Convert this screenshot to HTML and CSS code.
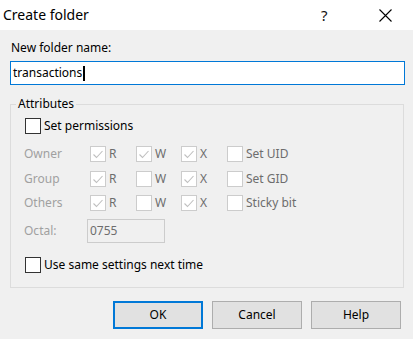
FILE: index.html
```html
<!DOCTYPE html>
<html>
<head>
<meta charset="utf-8">
<link rel="stylesheet" href="styles.css">
</head>
<body>
<div class="dialog">
  <div class="titlebar">
    <span class="title">Create folder</span>
    <span class="tb-help">?</span>
    <span class="tb-close"><svg width="13" height="13" viewBox="0 0 13 13"><path d="M0.5 0.5 L12.5 12.5 M12.5 0.5 L0.5 12.5" stroke="#000" stroke-width="1.1" fill="none"/></svg></span>
  </div>
  <div class="content">
    <div class="name-label">New folder name:</div>
    <div class="name-input"><span class="name-text">transactions</span><span class="caret"></span></div>
    <fieldset class="attrs">
      <legend class="attrs-legend">Attributes</legend>
      <div class="check-line">
        <span class="cb"></span><span class="cb-text">Set permissions</span>
      </div>
      <div class="perm-grid">
        <span class="perm-label">Owner</span>
        <span class="perm-cell"><span class="cb dis on"><svg viewBox="0 0 14 14"><polyline points="2.5,7.5 5.5,10.5 11.5,4"/></svg></span><span class="perm-text">R</span></span>
        <span class="perm-cell"><span class="cb dis on"><svg viewBox="0 0 14 14"><polyline points="2.5,7.5 5.5,10.5 11.5,4"/></svg></span><span class="perm-text">W</span></span>
        <span class="perm-cell"><span class="cb dis on"><svg viewBox="0 0 14 14"><polyline points="2.5,7.5 5.5,10.5 11.5,4"/></svg></span><span class="perm-text">X</span></span>
        <span class="perm-cell"><span class="cb dis"></span><span class="perm-text">Set UID</span></span>

        <span class="perm-label">Group</span>
        <span class="perm-cell"><span class="cb dis on"><svg viewBox="0 0 14 14"><polyline points="2.5,7.5 5.5,10.5 11.5,4"/></svg></span><span class="perm-text">R</span></span>
        <span class="perm-cell"><span class="cb dis"></span><span class="perm-text">W</span></span>
        <span class="perm-cell"><span class="cb dis on"><svg viewBox="0 0 14 14"><polyline points="2.5,7.5 5.5,10.5 11.5,4"/></svg></span><span class="perm-text">X</span></span>
        <span class="perm-cell"><span class="cb dis"></span><span class="perm-text">Set GID</span></span>

        <span class="perm-label">Others</span>
        <span class="perm-cell"><span class="cb dis on"><svg viewBox="0 0 14 14"><polyline points="2.5,7.5 5.5,10.5 11.5,4"/></svg></span><span class="perm-text">R</span></span>
        <span class="perm-cell"><span class="cb dis"></span><span class="perm-text">W</span></span>
        <span class="perm-cell"><span class="cb dis on"><svg viewBox="0 0 14 14"><polyline points="2.5,7.5 5.5,10.5 11.5,4"/></svg></span><span class="perm-text">X</span></span>
        <span class="perm-cell"><span class="cb dis"></span><span class="perm-text">Sticky bit</span></span>
      </div>
      <div class="octal-row">
        <span class="perm-label octal-label">Octal:</span>
        <span class="octal-input">0755</span>
      </div>
      <div class="check-line same-line">
        <span class="cb"></span><span class="cb-text">Use same settings next time</span>
      </div>
    </fieldset>
    <div class="buttons">
      <span class="btn btn-default">OK</span>
      <span class="btn">Cancel</span>
      <span class="btn">Help</span>
    </div>
  </div>
</div>
</body>
</html>
```

FILE: styles.css
```css
html, body {
  margin: 0;
  padding: 0;
}
body {
  width: 413px;
  height: 339px;
  overflow: hidden;
  background: #f0f0f0;
  font-family: "Noto Sans", "Liberation Sans", sans-serif;
  font-size: 12px;
  line-height: 16px;
  color: #000;
}
.dialog {
  width: 413px;
  height: 339px;
}
.titlebar {
  height: 30px;
  background: #fff;
  display: flex;
  align-items: center;
  padding-left: 3px;
}
.title {
  font-size: 14px;
  line-height: 30px;
  flex: 1;
}
.tb-help {
  font-size: 15px;
  line-height: 30px;
  width: 10px;
  margin-right: 48px;
  color: #111;
}
.tb-close {
  width: 13px;
  height: 13px;
  margin-right: 21px;
  margin-top: 1px;
  display: flex;
}
.content {
  padding: 10px 8px 0 10px;
}
.name-label {
  height: 16px;
  padding-left: 1px;
}
.name-input {
  margin-top: 5px;
  height: 22px;
  border: 1px solid #0078d7;
  background: #fff;
  display: flex;
  align-items: center;
  padding-left: 2px;
}
.caret {
  width: 2px;
  height: 15px;
  background: #000;
  margin-left: 1px;
}
.attrs {
  margin: 11px 1px 0 0;
  border: 1px solid #dcdcdc;
  padding: 6px 0 14px 14px;
  min-width: 0;
}
.attrs-legend {
  padding: 0 2px;
  margin-left: -9px;
  line-height: 16px;
}
.check-line {
  display: flex;
  align-items: center;
  height: 16px;
  gap: 3px;
}
.cb {
  box-sizing: border-box;
  width: 16px;
  height: 16px;
  border: 1px solid #333;
  background: #fff;
  display: inline-flex;
  flex: none;
}
.cb.dis {
  border-color: #cccccc;
}
.cb svg {
  width: 14px;
  height: 14px;
  fill: none;
  stroke: #bfbfbf;
  stroke-width: 1.1;
}
.perm-grid {
  margin-top: 12px;
  margin-left: -1px;
  display: grid;
  grid-template-columns: 66px 46px 45px 46px auto;
  grid-template-rows: 25px 24px 16px;
  align-items: start;
}
.perm-label {
  color: #a0a0a0;
  height: 16px;
}
.perm-cell {
  display: flex;
  align-items: center;
  gap: 3px;
  height: 16px;
}
.perm-text {
  color: #6d6d6d;
}
.octal-row {
  margin-top: 8px;
  margin-left: -1px;
  display: flex;
  align-items: center;
  height: 24px;
}
.octal-label {
  width: 63px;
}
.octal-input {
  box-sizing: border-box;
  width: 78px;
  height: 24px;
  border: 1px solid #cccccc;
  padding-left: 2px;
  color: #6d6d6d;
  display: flex;
  align-items: center;
}
.same-line {
  margin-top: 14px;
}
.buttons {
  margin-top: 13px;
  display: flex;
  justify-content: flex-end;
  gap: 9px;
  padding-right: 4px;
}
.btn {
  box-sizing: border-box;
  width: 90px;
  height: 28px;
  background: #e1e1e1;
  border: 1px solid #adadad;
  display: flex;
  align-items: center;
  justify-content: center;
}
.btn-default {
  border: 2px solid #0078d7;
}
```
